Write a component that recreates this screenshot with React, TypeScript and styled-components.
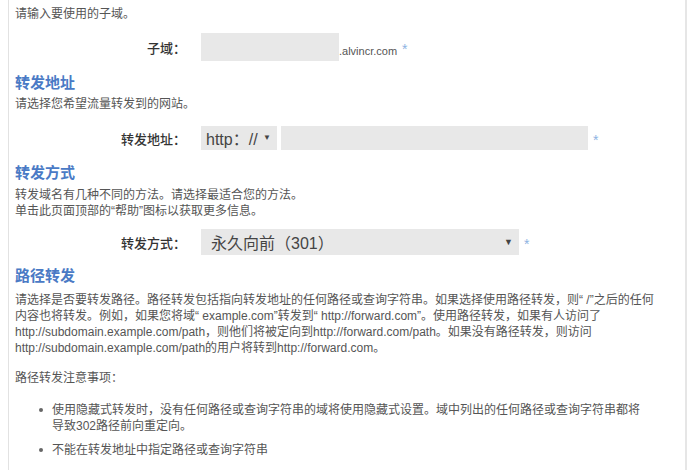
import React from 'react';
import styled, { createGlobalStyle } from 'styled-components';

const GlobalStyle = createGlobalStyle`
  html, body {
    margin: 0;
    padding: 0;
    background: #ffffff;
    font-family: "Liberation Sans", "Noto Sans CJK SC", sans-serif;
  }
`;

const Page = styled.div`
  margin-left: 8px;
  width: 679px;
  height: 470px;
  overflow: hidden;
  border-left: 1px solid #e2e2e2;
  border-right: 2px solid #e6e6e6;
  padding: 6px 0 0 6px;
  box-sizing: border-box;
  color: #555555;
`;

const Text = styled.p<{ $top?: number }>`
  margin: ${(p) => p.$top ?? 0}px 0 0 0;
  font-size: 12px;
  line-height: 16px;
  color: #555555;
`;

const Heading = styled.h3<{ $top: number }>`
  margin: ${(p) => p.$top}px 0 0 0;
  font-size: 15px;
  line-height: 20px;
  font-weight: bold;
  color: #4a7ac5;
  font-family: "Noto Sans CJK SC", sans-serif;
`;

const Row = styled.div<{ $top: number; $h: number }>`
  margin-top: ${(p) => p.$top}px;
  height: ${(p) => p.$h}px;
  display: flex;
  align-items: center;
`;

const Label = styled.label`
  width: 186px;
  padding-right: 15px;
  box-sizing: border-box;
  text-align: right;
  font-size: 13px;
  color: #333333;
  font-weight: 500;
  font-family: "Noto Sans CJK SC", sans-serif;
`;

const Field = styled.div<{ $w: number }>`
  width: ${(p) => p.$w}px;
  height: 100%;
  background: #e8e8e8;
  box-sizing: border-box;
`;

const Select = styled.div<{ $w: number; $size: number; $pad: number }>`
  width: ${(p) => p.$w}px;
  height: 100%;
  background: #e8e8e8;
  box-sizing: border-box;
  display: flex;
  align-items: center;
  justify-content: space-between;
  padding: 0 6px 0 ${(p) => p.$pad}px;
  font-size: ${(p) => p.$size}px;
  color: #444444;
  font-family: "Liberation Sans", "Noto Sans CJK SC", sans-serif;
`;

const Arrow = styled.span<{ $size: number }>`
  font-size: ${(p) => p.$size}px;
  color: #444444;
  line-height: 1;
`;

const Suffix = styled.span`
  font-size: 11px;
  color: #555555;
  align-self: flex-end;
  padding-bottom: 4px;
`;

const Star = styled.span`
  color: #8db3e2;
  font-size: 14px;
  margin-left: 5px;
  padding-top: 4px;
`;

const Gap = styled.span<{ $w: number }>`
  width: ${(p) => p.$w}px;
`;

const List = styled.ul`
  margin: 16px 0 0 0;
  padding: 0 0 0 24px;
  list-style: none;
`;

const Item = styled.li`
  position: relative;
  padding-left: 13px;
  font-size: 12px;
  line-height: 16px;
  color: #555555;
  margin-bottom: 8px;
  width: 625px;

  &::before {
    content: '';
    position: absolute;
    left: 0;
    top: 6px;
    width: 4px;
    height: 4px;
    border-radius: 50%;
    background: #666666;
  }
`;

export default function App() {
  return (
    <>
      <GlobalStyle />
      <Page>
        <Text>请输入要使用的子域。</Text>
        <Row $top={11} $h={28}>
          <Label>子域：</Label>
          <Field $w={138} />
          <Suffix>.alvincr.com</Suffix>
          <Star>*</Star>
        </Row>

        <Heading $top={11}>转发地址</Heading>
        <Text $top={4}>请选择您希望流量转发到的网站。</Text>
        <Row $top={14} $h={24}>
          <Label>转发地址：</Label>
          <Select $w={76} $size={16} $pad={5}>
            http：//<Arrow $size={8}>▼</Arrow>
          </Select>
          <Gap $w={4} />
          <Field $w={307} />
          <Star>*</Star>
        </Row>

        <Heading $top={12}>转发方式</Heading>
        <Text $top={5}>
          转发域名有几种不同的方法。请选择最适合您的方法。
          <br />
          单击此页面顶部的“帮助”图标以获取更多信息。
        </Text>
        <Row $top={10} $h={26}>
          <Label>转发方式：</Label>
          <Select $w={318} $size={16} $pad={10}>
            <span>永久向前（301）</span>
            <Arrow $size={9}>▼</Arrow>
          </Select>
          <Star>*</Star>
        </Row>

        <Heading $top={10}>路径转发</Heading>
        <Text $top={7}>
          请选择是否要转发路径。路径转发包括指向转发地址的任何路径或查询字符串。如果选择使用路径转发，则“ /”之后的任何
          <br />
          内容也将转发。例如，如果您将域“ example.com”转发到“ http://forward.com”。使用路径转发，如果有人访问了
          <br />
          http://subdomain.example.com/path，则他们将被定向到http://forward.com/path。如果没有路径转发，则访问
          <br />
          http://subdomain.example.com/path的用户将转到http://forward.com。
        </Text>
        <Text $top={14}>路径转发注意事项：</Text>
        <List>
          <Item>
            使用隐藏式转发时，没有任何路径或查询字符串的域将使用隐藏式设置。域中列出的任何路径或查询字符串都将
            <br />
            导致302路径前向重定向。
          </Item>
          <Item>不能在转发地址中指定路径或查询字符串</Item>
        </List>
      </Page>
    </>
  );
}
